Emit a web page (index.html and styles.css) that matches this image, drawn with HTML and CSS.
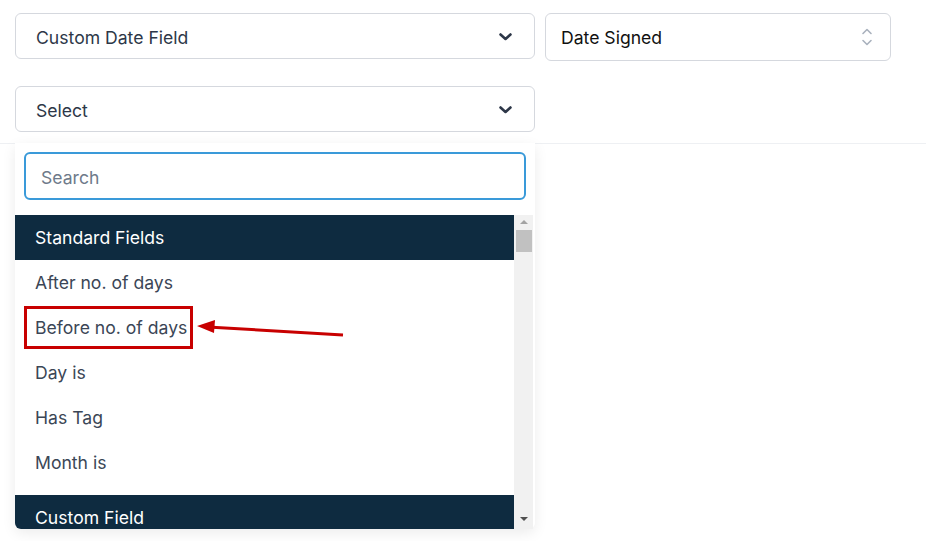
FILE: index.html
```html
<!DOCTYPE html>
<html lang="en">
<head>
    <meta charset="UTF-8">
    <meta name="viewport" content="width=device-width, initial-scale=1.0">
    <title>Condition Filter</title>
    <link rel="stylesheet" href="styles.css">
</head>
<body>
    <div class="filters">
        <div class="row">
            <div class="select wide">
                <span>Custom Date Field</span>
                <svg class="chevron" width="13" height="8" viewBox="0 0 13 8"><path d="M1.5 1.5 L6.5 6 L11.5 1.5" fill="none" stroke="#2d3748" stroke-width="2.6" stroke-linecap="round" stroke-linejoin="round"/></svg>
            </div>
            <div class="select narrow">
                <span>Date Signed</span>
                <svg class="updown" width="12" height="20" viewBox="0 0 12 20"><path d="M2 6.5 L6 2.5 L10 6.5 M2 13.5 L6 17.5 L10 13.5" fill="none" stroke="#a9b1bd" stroke-width="1.6" stroke-linecap="round" stroke-linejoin="round"/></svg>
            </div>
        </div>
        <div class="row second">
            <div class="select wide">
                <span>Select</span>
                <svg class="chevron" width="13" height="8" viewBox="0 0 13 8"><path d="M1.5 1.5 L6.5 6 L11.5 1.5" fill="none" stroke="#2d3748" stroke-width="2.6" stroke-linecap="round" stroke-linejoin="round"/></svg>
            </div>
        </div>
    </div>
    <div class="divider"></div>

    <div class="dropdown">
        <input type="text" class="search" placeholder="Search">
        <div class="list-wrap">
            <div class="list">
                <div class="group">Standard Fields</div>
                <div class="item">After no. of days</div>
                <div class="item"><span class="marked">Before no. of days</span></div>
                <div class="item">Day is</div>
                <div class="item">Has Tag</div>
                <div class="item">Month is</div>
                <div class="group next">Custom Field</div>
            </div>
            <div class="scrollbar">
                <span class="arrow up"></span>
                <span class="thumb"></span>
                <span class="track"></span>
                <span class="arrow down"></span>
            </div>
        </div>
    </div>

    <svg class="pointer" width="160" height="24" viewBox="0 0 160 24">
        <line x1="153" y1="17" x2="22" y2="9.2" stroke="#c80000" stroke-width="3"/>
        <polygon points="7,8 25,2 24,15" fill="#c80000"/>
    </svg>
</body>
</html>
```

FILE: styles.css
```css
body {
    margin: 0;
    font-family: Inter, "Noto Sans", Arial, sans-serif;
    background: #fff;
    color: #2d3748;
}
.filters {
    padding: 13px 0 0 15px;
}
.row {
    display: flex;
    gap: 10px;
    align-items: flex-start;
}
.row.second {
    margin-top: 25px;
}
.select {
    box-sizing: border-box;
    display: flex;
    align-items: center;
    justify-content: space-between;
    border: 1px solid #d5d8de;
    border-radius: 6px;
    background: #fff;
    font-size: 17.6px;
}
.select.wide {
    width: 520px;
    height: 46px;
    padding: 2px 22px 0 20px;
}
.select.narrow {
    width: 346px;
    height: 48px;
    padding: 0 17px 0 15px;
    color: #111;
}
.chevron {
    margin-top: -1px;
}
.divider {
    margin-top: 11px;
    border-bottom: 1px solid #eef0f3;
}
.dropdown {
    position: absolute;
    left: 15px;
    top: 143px;
    width: 520px;
    box-sizing: border-box;
    padding: 9px 0 0 0;
    background: #fff;
    border-radius: 0 0 6px 6px;
    box-shadow: 0 4px 14px rgba(0, 0, 0, 0.08);
}
.search {
    display: block;
    box-sizing: border-box;
    width: 502px;
    height: 48px;
    margin: 0 0 0 9px;
    padding: 2px 15px 0;
    border: 2px solid #3a9ad9;
    border-radius: 6px;
    font-family: inherit;
    font-size: 17.6px;
    color: #2d3748;
    outline: none;
}
.search::placeholder {
    color: #6e7a8a;
}
.list-wrap {
    display: flex;
    margin-top: 15px;
    width: 518px;
    height: 314px;
}
.list {
    width: 499px;
    overflow: hidden;
    border-radius: 0 0 0 6px;
}
.group {
    height: 45px;
    line-height: 46px;
    padding-left: 20px;
    background: #0e2b40;
    color: #fff;
    font-size: 17.6px;
}
.group.next {
    margin-top: 10px;
}
.item {
    height: 45px;
    line-height: 46px;
    padding-left: 20px;
    font-size: 17.6px;
    color: #3b4656;
}
.marked {
    position: relative;
}
.marked::before {
    content: "";
    position: absolute;
    left: -11px;
    right: -6px;
    top: -11px;
    bottom: -11px;
    border: 3px solid #c80000;
}
.scrollbar {
    width: 19px;
    background: #f1f1f1;
    display: flex;
    flex-direction: column;
    align-items: center;
}
.arrow {
    width: 0;
    height: 0;
    border-left: 4px solid transparent;
    border-right: 4px solid transparent;
}
.arrow.up {
    margin-top: 5px;
    border-bottom: 4px solid #a3a3a3;
}
.arrow.down {
    margin-bottom: 8px;
    border-top: 4px solid #505050;
}
.thumb {
    margin-top: 6px;
    width: 16px;
    height: 22px;
    background: #c1c1c1;
}
.track {
    flex: 1;
}
.pointer {
    position: absolute;
    left: 190px;
    top: 318px;
}
```
